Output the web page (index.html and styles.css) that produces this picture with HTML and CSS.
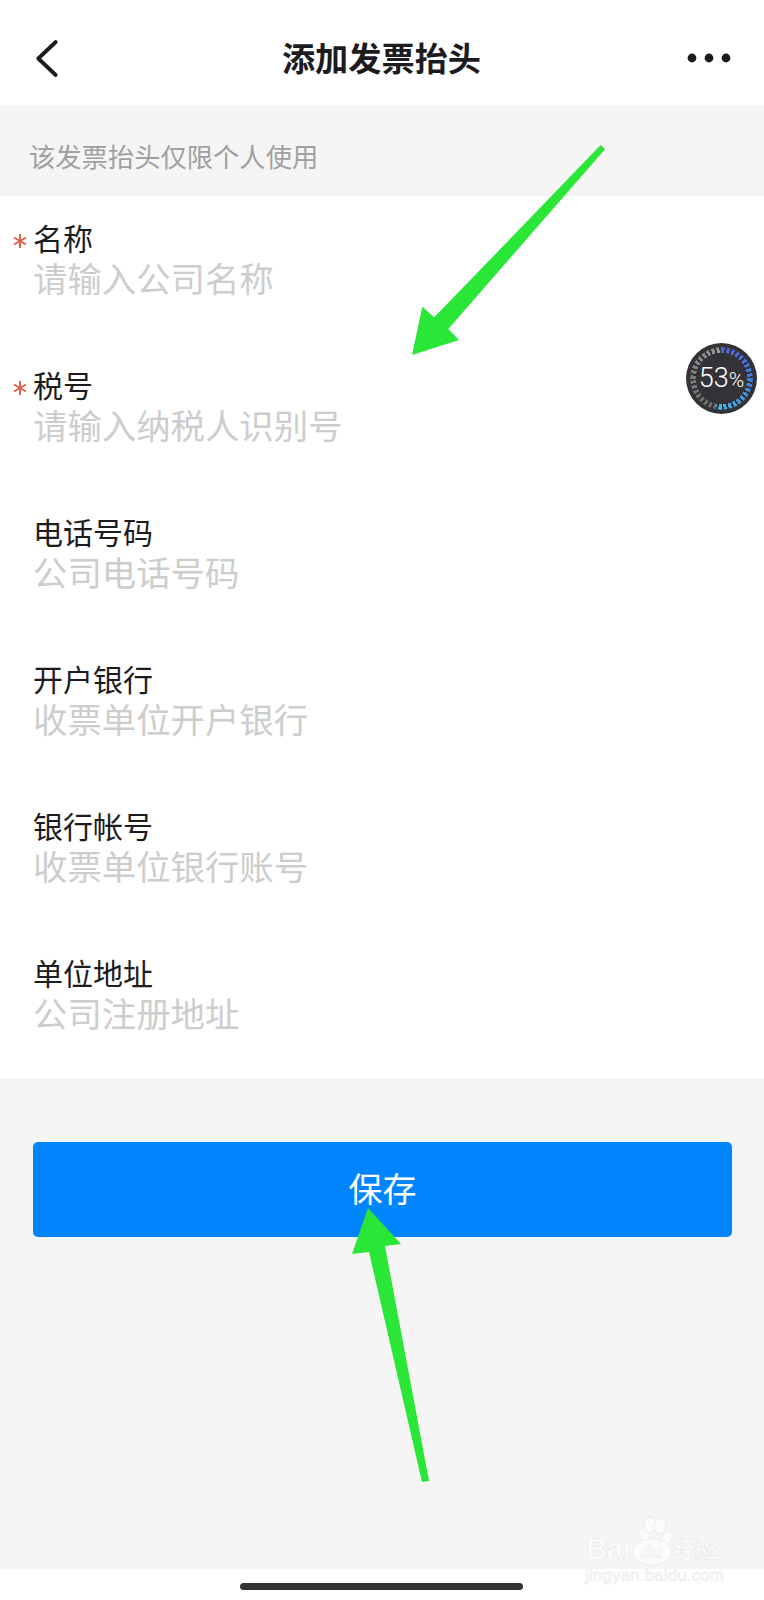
FILE: index.html
```html
<!DOCTYPE html>
<html lang="zh-CN">
<head>
<meta charset="utf-8">
<title>添加发票抬头</title>
<link rel="stylesheet" href="styles.css">
</head>
<body>
<div class="page">
  <header class="topbar">
    <svg class="back" width="40" height="50" viewBox="0 0 40 50"><polyline points="25.7,9 8.3,25.5 25.7,42" fill="none" stroke="#1c1c1e" stroke-width="3.8" stroke-linecap="round" stroke-linejoin="round"/></svg>
    <h1 class="title">添加发票抬头</h1>
    <svg class="more" width="44" height="12" viewBox="0 0 44 12"><circle cx="5" cy="6" r="4.4" fill="#1c1c1e"/><circle cx="22" cy="6" r="4.4" fill="#1c1c1e"/><circle cx="39" cy="6" r="4.4" fill="#1c1c1e"/></svg>
  </header>

  <div class="note">该发票抬头仅限个人使用</div>

  <section class="form">
    <div class="row">
      <div class="label"><svg class="star" width="16" height="16" viewBox="0 0 16 16"><path d="M8 1v14M2 4.5l12 7M14 4.5l-12 7" stroke="#e2604c" stroke-width="2" fill="none"/></svg>名称</div>
      <div class="placeholder">请输入公司名称</div>
    </div>
    <div class="row">
      <div class="label"><svg class="star" width="16" height="16" viewBox="0 0 16 16"><path d="M8 1v14M2 4.5l12 7M14 4.5l-12 7" stroke="#e2604c" stroke-width="2" fill="none"/></svg>税号</div>
      <div class="placeholder">请输入纳税人识别号</div>
    </div>
    <div class="row">
      <div class="label">电话号码</div>
      <div class="placeholder">公司电话号码</div>
    </div>
    <div class="row">
      <div class="label">开户银行</div>
      <div class="placeholder">收票单位开户银行</div>
    </div>
    <div class="row">
      <div class="label">银行帐号</div>
      <div class="placeholder">收票单位银行账号</div>
    </div>
    <div class="row">
      <div class="label">单位地址</div>
      <div class="placeholder">公司注册地址</div>
    </div>
  </section>

  <main class="actions">
    <button class="save" type="button">保存</button>
  </main>

  <footer class="home">
    <div class="home-bar"></div>
  </footer>

  <div class="badge">
    <div class="ring"></div>
    <div class="percent">53<span class="sign">%</span></div>
  </div>

  <svg class="overlay" width="764" height="1600" viewBox="0 0 764 1600">
    <polygon class="arrow" points="600.7,145 605,149.3 448.3,329 459,340 412,355 422.3,306.7 434.3,317.3"/>
    <polygon class="arrow" points="368,1208 401,1244 385,1246 429,1481 422,1482 369,1252 352,1254"/>
    <g class="mark">
      <ellipse cx="644" cy="1535" rx="5" ry="7.5" transform="rotate(-25 644 1535)"/>
      <ellipse cx="650" cy="1525" rx="6" ry="8"/>
      <ellipse cx="660" cy="1526" rx="6" ry="8" transform="rotate(15 660 1526)"/>
      <ellipse cx="667" cy="1538" rx="5" ry="7.5" transform="rotate(25 667 1538)"/>
      <ellipse cx="652" cy="1552" rx="20" ry="13"/>
      <text class="mark-latin" x="586" y="1559">Bai</text>
      <text class="mark-du" x="641" y="1558">du</text>
      <text class="mark-cjk" x="673" y="1558">经验</text>
      <text class="mark-url" x="585" y="1581">jingyan.baidu.com</text>
    </g>
  </svg>
</div>
</body>
</html>
```

FILE: styles.css
```css
* { box-sizing: border-box; }
html, body { margin: 0; padding: 0; }
body {
  background: #fff;
  font-family: "Liberation Sans", "Noto Sans CJK SC", sans-serif;
}
.page {
  position: relative;
  width: 764px;
  height: 1600px;
  display: flex;
  flex-direction: column;
  overflow: hidden;
}
.topbar {
  flex: 0 0 105px;
  display: flex;
  align-items: center;
  justify-content: space-between;
  padding: 11px 33px 0 30px;
  height: 105px;
  background: #fff;
}
.title {
  margin: 3px 0 0 6px;
  font-size: 33.2px;
  line-height: 40px;
  font-weight: 700;
  color: #1c1c1e;
}
.note {
  flex: 0 0 91px;
  height: 91px;
  padding: 0 0 0 29px;
  background: #f5f5f5;
  color: #a0a0a0;
  font-size: 26.3px;
  line-height: 107px;
}
.form {
  flex: 0 0 882px;
  background: #fff;
  display: flex;
  flex-direction: column;
}
.row {
  flex: 0 0 147px;
  padding: 24px 0 0 33px;
}
.label {
  font-size: 30px;
  line-height: 40px;
  color: #1c1c1e;
  position: relative;
}
.star {
  position: absolute;
  left: -21px;
  top: 13px;
}
.placeholder {
  font-size: 34.4px;
  line-height: 40px;
  color: #cdcdcd;
}
.actions {
  flex: 1 1 auto;
  background: #f5f5f5;
  padding: 64px 32px 0 33px;
}
.save {
  display: block;
  width: 100%;
  height: 95px;
  border: 0;
  border-radius: 5px;
  background: #0084ff;
  color: #fff;
  font-family: inherit;
  font-size: 34px;
  padding: 0 0 4px 0;
}
.home {
  flex: 0 0 31px;
  background: #fff;
  padding: 14px 0 0 240px;
}
.home-bar {
  width: 283px;
  height: 7px;
  border-radius: 4px;
  background: #333;
}
.badge {
  position: absolute;
  left: 686px;
  top: 343px;
  width: 71px;
  height: 71px;
  border-radius: 50%;
  background: #333337;
  display: flex;
  align-items: center;
  justify-content: center;
}
.ring {
  position: absolute;
  inset: 4px;
  border-radius: 50%;
  background: conic-gradient(#5560d2 0, #3b7fe4 25%, #45b8e2 53%, #6a6a6a 53%, #777 75%, #999 100%);
  -webkit-mask-image:
    repeating-conic-gradient(#000 0 6deg, transparent 6deg 10deg),
    radial-gradient(circle, transparent 25.5px, #000 26px);
  -webkit-mask-composite: source-in;
  mask-composite: intersect;
}
.percent {
  position: relative;
  font-family: "Roboto", "Liberation Sans", sans-serif;
  font-weight: 300;
  color: #fff;
  font-size: 27px;
  line-height: 30px;
  white-space: nowrap;
}
.sign { font-size: 21px; }
.overlay {
  position: absolute;
  left: 0;
  top: 0;
  pointer-events: none;
}
.arrow { fill: #2ae637; }
.mark ellipse {
  fill: #fbfbfb;
  stroke: #ececec;
  stroke-width: 1;
}
.mark text {
  fill: #fcfcfc;
  stroke: #ececec;
  stroke-width: 0.7;
}
.mark-latin {
  font-family: "Liberation Sans", sans-serif;
  font-weight: 700;
  font-size: 29px;
}
.mark-du {
  font-family: "Liberation Sans", sans-serif;
  font-weight: 700;
  font-size: 18px;
}
.mark-cjk {
  font-family: "Liberation Sans", "Noto Sans CJK SC", sans-serif;
  font-weight: 700;
  font-size: 23px;
}
.mark-url {
  font-family: "Liberation Sans", sans-serif;
  font-size: 16.5px;
  letter-spacing: 0.35px;
}
```
